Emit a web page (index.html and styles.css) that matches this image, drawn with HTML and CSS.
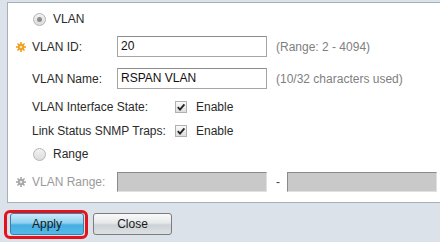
FILE: index.html
```html
<!DOCTYPE html>
<html>
<head>
<meta charset="utf-8">
<link rel="stylesheet" href="styles.css">
</head>
<body>
<div class="panel">
  <div class="row">
    <span class="icon-cell"></span>
    <span class="radio checked"></span><span class="radio-text">VLAN</span>
  </div>
  <div class="row">
    <span class="icon-cell"><svg class="star" viewBox="0 0 10 10" width="10" height="10"><g fill="#f0a020"><circle cx="5" cy="5" r="3.2"/><rect x="4.2" y="0" width="1.6" height="10"/><rect x="0" y="4.2" width="10" height="1.6"/><rect x="4.2" y="0" width="1.6" height="10" transform="rotate(45 5 5)"/><rect x="4.2" y="0" width="1.6" height="10" transform="rotate(-45 5 5)"/></g><circle cx="5" cy="5" r="1.3" fill="#fde7b0"/></svg></span>
    <span class="label">VLAN ID:</span>
    <span class="input">20</span>
    <span class="hint">(Range: 2 - 4094)</span>
  </div>
  <div class="row">
    <span class="icon-cell"></span>
    <span class="label">VLAN Name:</span>
    <span class="input">RSPAN VLAN</span>
    <span class="hint">(10/32 characters used)</span>
  </div>
  <div class="row">
    <span class="icon-cell"></span>
    <span class="label wide">VLAN Interface State:</span>
    <span class="check"><svg viewBox="0 0 12 12" width="12" height="12"><path d="M2.8 6.2 L5 8.6 L9.4 3.4" fill="none" stroke="#222" stroke-width="1.8"/></svg></span>
    <span class="check-text">Enable</span>
  </div>
  <div class="row">
    <span class="icon-cell"></span>
    <span class="label wide">Link Status SNMP Traps:</span>
    <span class="check"><svg viewBox="0 0 12 12" width="12" height="12"><path d="M2.8 6.2 L5 8.6 L9.4 3.4" fill="none" stroke="#222" stroke-width="1.8"/></svg></span>
    <span class="check-text">Enable</span>
  </div>
  <div class="row">
    <span class="icon-cell"></span>
    <span class="radio"></span><span class="radio-text">Range</span>
  </div>
  <div class="row">
    <span class="icon-cell"><svg class="star" viewBox="0 0 10 10" width="10" height="10"><g fill="#a8a8a8"><circle cx="5" cy="5" r="3.2"/><rect x="4.2" y="0" width="1.6" height="10"/><rect x="0" y="4.2" width="10" height="1.6"/><rect x="4.2" y="0" width="1.6" height="10" transform="rotate(45 5 5)"/><rect x="4.2" y="0" width="1.6" height="10" transform="rotate(-45 5 5)"/></g><circle cx="5" cy="5" r="1.3" fill="#e8e8e8"/></svg></span>
    <span class="label disabled">VLAN Range:</span>
    <span class="input off"></span>
    <span class="dash">-</span>
    <span class="input off"></span>
  </div>
</div>
<div class="footer">
  <div class="focus"><button class="btn apply">Apply</button></div>
  <button class="btn close">Close</button>
</div>
</body>
</html>
```
FILE: styles.css
```css
html, body {
  margin: 0;
  padding: 0;
}
body {
  width: 440px;
  height: 242px;
  overflow: hidden;
  background: #dbe2e9;
  font-family: "Liberation Sans", Arial, sans-serif;
  font-size: 12px;
  color: #2a2a2a;
}
.panel {
  margin: 2px 0 0 7px;
  height: 199px;
  width: 432px;
  background: #fff;
  border: 1px solid #a4b0bb;
  border-right: none;
  display: grid;
  grid-template-rows: 32px 23px 41px 16px 32px 14px 41px;
}
.row {
  display: flex;
  align-items: center;
}
.icon-cell {
  width: 24px;
  display: flex;
  align-items: center;
  flex: none;
}
.star {
  margin-left: 8px;
  display: block;
}
.label {
  width: 85px;
  flex: none;
}
.label.wide {
  width: 143px;
}
.label.disabled {
  color: #9a9a9a;
}
.radio {
  width: 11px;
  height: 11px;
  border: 1px solid #b4b4b4;
  border-radius: 50%;
  margin-left: 1px;
  background: linear-gradient(#f2f2f2, #dcdcdc);
  position: relative;
  flex: none;
}
.radio.checked::after {
  content: "";
  position: absolute;
  left: 3px;
  top: 3px;
  width: 5px;
  height: 5px;
  border-radius: 50%;
  background: #8c8c8c;
}
.radio-text {
  margin-left: 7px;
}
.input {
  width: 145px;
  height: 19px;
  border: 1px solid #a6a6a6;
  border-top-color: #8c8c8c;
  padding-left: 3px;
  line-height: 19px;
  flex: none;
  color: #111;
}
.input.off {
  background: #c9c9c9;
  border-color: #8a8a8a #e0e0e0 #e0e0e0 #8a8a8a;
  height: 18px;
  width: 145px;
}
.hint {
  margin-left: 9px;
  color: #808080;
}
.dash {
  margin: 0 7px 0 9px;
  color: #444;
}
.check {
  width: 12px;
  height: 12px;
  border: 1px solid #b0b0b0;
  background: linear-gradient(#fafafa, #dedede);
  box-sizing: border-box;
  display: flex;
  align-items: center;
  justify-content: center;
  flex: none;
}
.check svg {
  display: block;
  flex: none;
}
.check-text {
  margin-left: 9px;
}
.footer {
  display: flex;
  align-items: flex-start;
  margin-top: 7px;
  padding-left: 4px;
}
.focus {
  border: 3px solid #e3121c;
  border-radius: 6px;
  padding: 0 1px 1px 3px;
}
.btn {
  font-family: "Liberation Sans", Arial, sans-serif;
  font-size: 12px;
  color: #1a1a1a;
  height: 22px;
  padding: 0;
  margin: 0;
  border-radius: 3px;
  display: block;
}
.apply {
  width: 74px;
  border: 1px solid #3a7fa8;
  background: linear-gradient(#c9ebfb 0%, #8fd0f0 45%, #45aee2 55%, #55b9e8 100%);
}
.close {
  width: 79px;
  margin: 3px 0 0 5px;
  border: 1px solid #7c7c7c;
  background: linear-gradient(#fafafa 0%, #e6e8ea 45%, #cdd2d6 55%, #dde1e4 100%);
}
```
